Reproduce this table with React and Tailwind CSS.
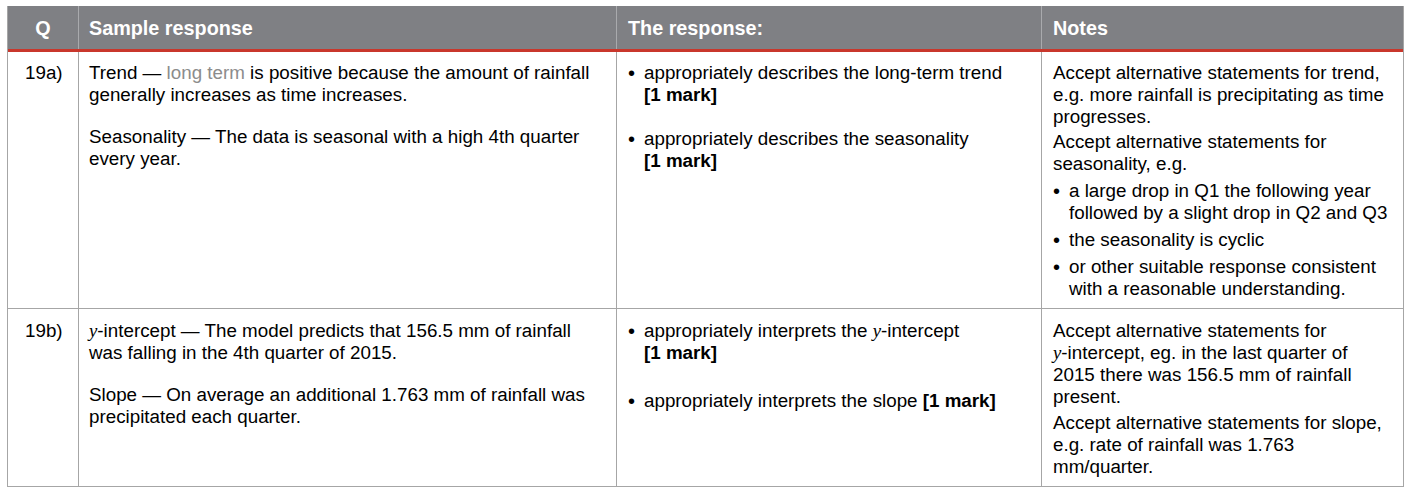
import React from 'react';

const Y = () => <span className="italic" style={{ fontFamily: '"Liberation Serif", serif' }}>y</span>;

function Bullet({ children, className = '' }) {
  return (
    <div className={`flex ${className}`}>
      <span className="w-4 shrink-0 text-[20px]">•</span>
      <div>{children}</div>
    </div>
  );
}

export default function App() {
  const cell = "border-l border-[#a6a6a6]";
  return (
    <div className="bg-white w-[1408px] h-[490px] pt-[6px] pl-[7px] text-[18.8px] leading-[22px] text-black" style={{ fontFamily: '"Liberation Sans", Arial, sans-serif' }}>
      <div className="w-[1397px] border-x border-b border-[#a6a6a6]">
        {/* header */}
        <div className="grid grid-cols-[70px_538px_425px_362px] bg-[#7f8084] text-white font-bold text-[19.8px] border-b-[3px] border-[#c9372c]">
          <div className="h-[43px] flex items-center justify-center">Q</div>
          <div className="h-[43px] flex items-center px-[10px] border-l border-[#a9aaad]">Sample response</div>
          <div className="h-[43px] flex items-center px-[11px] border-l border-[#a9aaad]">The response:</div>
          <div className="h-[43px] flex items-center px-[11px] border-l border-[#a9aaad]">Notes</div>
        </div>

        {/* 19a */}
        <div className="grid grid-cols-[70px_538px_425px_362px] border-b border-[#a6a6a6]">
          <div className="pt-[10px] pl-[17px]">19a)</div>
          <div className={`${cell} pt-[10px] px-[10px]`}>
            <p>Trend — <span className="text-[#8c8c8c]">long term</span> is positive because the amount of rainfall generally increases as time increases.</p>
            <p className="mt-[20px]">Seasonality — The data is seasonal with a high 4th quarter every year.</p>
          </div>
          <div className={`${cell} pt-[10px] pl-[11px] pr-2`}>
            <Bullet>appropriately describes the long-term trend<br /><b>[1 mark]</b></Bullet>
            <Bullet className="mt-[22px]">appropriately describes the seasonality<br /><b>[1 mark]</b></Bullet>
          </div>
          <div className={`${cell} pt-[10px] pl-[11px] pr-2 pb-[8px]`}>
            <p>Accept alternative statements for trend, e.g. more rainfall is precipitating as time progresses.</p>
            <p className="mt-[3px]">Accept alternative statements for seasonality, e.g.</p>
            <Bullet className="mt-[5px]">a large drop in Q1 the following year followed by a slight drop in Q2 and Q3</Bullet>
            <Bullet className="mt-[5px]">the seasonality is cyclic</Bullet>
            <Bullet className="mt-[5px]">or other suitable response consistent with a reasonable understanding.</Bullet>
          </div>
        </div>

        {/* 19b */}
        <div className="grid grid-cols-[70px_538px_425px_362px]">
          <div className="pt-[11px] pl-[17px]">19b)</div>
          <div className={`${cell} pt-[11px] px-[10px]`}>
            <p><span className="whitespace-nowrap"><Y />-intercept</span> — The model predicts that 156.5 mm of rainfall was falling in the 4th quarter of 2015.</p>
            <p className="mt-[20px]">Slope — On average an additional 1.763 mm of rainfall was precipitated each quarter.</p>
          </div>
          <div className={`${cell} pt-[11px] pl-[11px] pr-2`}>
            <Bullet>appropriately interprets the <span className="whitespace-nowrap"><Y />-intercept</span><br /><b>[1 mark]</b></Bullet>
            <Bullet className="mt-[26px]">appropriately interprets the slope <b>[1 mark]</b></Bullet>
          </div>
          <div className={`${cell} pt-[11px] pl-[11px] pr-3 pb-[8px]`}>
            <p>Accept alternative statements for <span className="whitespace-nowrap"><Y />-intercept,</span> eg. in the last quarter of 2015 there was 156.5 mm of rainfall present.</p>
            <p className="mt-[4px]">Accept alternative statements for slope, e.g. rate of rainfall was 1.763 mm/quarter.</p>
          </div>
        </div>
      </div>
    </div>
  );
}
